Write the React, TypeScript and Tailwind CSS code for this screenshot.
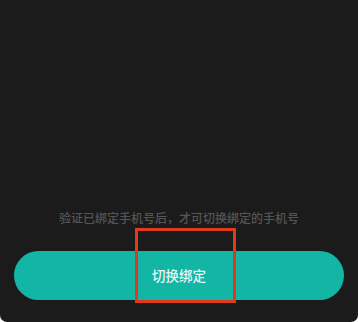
export default function App() {
  return (
    <div className="h-[322px] w-[358px] bg-white">
      <div
        className="relative flex h-full flex-col justify-end rounded-b-[7px] bg-[#1b1b1b] px-[14px] pb-[22px]"
        style={{ fontFamily: '"Noto Sans CJK SC", "Noto Sans", sans-serif' }}
      >
        <p className="text-center text-[12px] font-medium leading-none text-[#555555]">
          验证已绑定手机号后，才可切换绑定的手机号
        </p>
        <button className="mt-[27px] h-[49px] w-full rounded-full bg-[#13b6a5] text-[13.5px] font-medium text-[#e8f6f4]">
          切换绑定
        </button>
        <div className="absolute left-[135px] top-[228px] h-[75px] w-[101px] border-[3px] border-[#e0391c]" />
      </div>
    </div>
  );
}
